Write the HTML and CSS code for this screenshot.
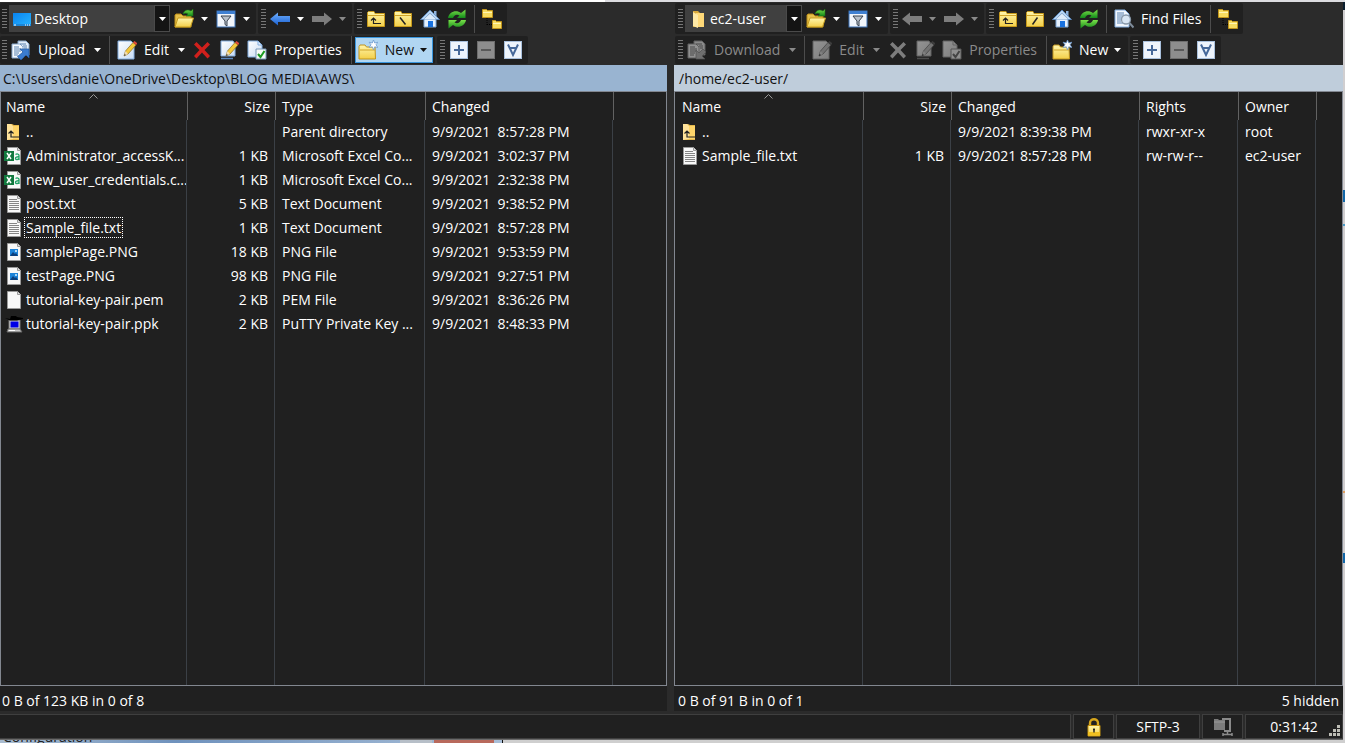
FILE: index.html
```html
<!DOCTYPE html>
<html lang="en">
<head>
	<meta charset="utf-8">
	<title>AWS - ec2-user</title>
	<link rel="stylesheet" href="styles.css">
</head>
<body>

<svg class="sprite" aria-hidden="true">
	<defs>
		<linearGradient id="gold" x1="0" y1="0" x2="0" y2="1">
			<stop offset="0" stop-color="#fff6ae"/><stop offset="1" stop-color="#f3cf48"/>
		</linearGradient>
		<linearGradient id="blue" x1="0" y1="0" x2="0" y2="1">
			<stop offset="0" stop-color="#6fb0ff"/><stop offset="1" stop-color="#1a5fd0"/>
		</linearGradient>
		<linearGradient id="green" x1="0" y1="0" x2="0" y2="1">
			<stop offset="0" stop-color="#7be04a"/><stop offset="1" stop-color="#128a1a"/>
		</linearGradient>
		<linearGradient id="sky" x1="0" y1="0" x2="1" y2="1">
			<stop offset="0" stop-color="#0a84f0"/><stop offset="1" stop-color="#27b4ff"/>
		</linearGradient>
		<linearGradient id="paper" x1="0" y1="0" x2="1" y2="1">
			<stop offset="0" stop-color="#fff"/><stop offset="1" stop-color="#c8dcf4"/>
		</linearGradient>
	</defs>
	<symbol id="caret" viewBox="0 0 7 4"><path d="M0 0h7L3.500 4z" fill="currentColor"/></symbol>
	<symbol id="sort" viewBox="0 0 9 5"><path d="M.5 4.500l4-4 4 4" fill="none" stroke="#999"/></symbol>
	<symbol id="desktop" viewBox="0 0 20 20">
		<rect x="1" y="4" width="18" height="13" fill="url(#sky)"/>
		<path d="M1 15h18v2H1z" fill="#1b86d8"/>
		<path d="M2 16h2M13 16h1M15 16h1M17 16h1" stroke="#fff"/>
	</symbol>
	<symbol id="folder" viewBox="0 0 20 20">
		<path d="M5 2h5l2 2v14H5z" fill="#d9a93c"/>
		<path d="M8 4h8v14H8z" fill="#ffd978"/>
		<path d="M5 3l5 3v13l-5-2z" fill="#ffe9a6"/>
	</symbol>
	<symbol id="open" viewBox="0 0 20 20">
		<path d="M1 18V6l1-1h5l2 2h8v11z" fill="#e6c04a" stroke="#b98b16"/>
		<path d="M1 18L4 9h15.500l-3 9z" fill="url(#gold)" stroke="#c79d20"/>
		<path d="M9 5c1-4 5-5 8-3l2-2v7h-7l2-2c-2-1-3-1-5 0z" fill="url(#green)" stroke="#1d6b16" stroke-width=".6"/>
	</symbol>
	<symbol id="filter" viewBox="0 0 20 20">
		<rect x="1" y="2" width="18" height="16" fill="#f2f6fc" stroke="#3c73b8"/>
		<path d="M1 2h18v3H1z" fill="#3f80d2"/>
		<path d="M5 7h10l-4 5v5l-2-1.500V12z" fill="#b8c0ca" stroke="#39424e"/>
	</symbol>
	<symbol id="back" viewBox="0 0 20 20">
		<path d="M0 10l8-6.500V7h12v6H8v3.500z" fill="var(--flat, url(#blue))"/>
	</symbol>
	<symbol id="forward" viewBox="0 0 20 20">
		<path d="M20 10l-8-6.500V7H0v6h12v3.500z" fill="var(--flat, url(#blue))"/>
	</symbol>
	<symbol id="small-folder" viewBox="0 0 20 20">
		<path d="M1.500 17.500v-14l1-1h5.500l1 2h9.500v13z" fill="url(#gold)" stroke="#c79a1c"/>
		<path d="M2 6.500h16" stroke="#d0a428"/>
	</symbol>
	<symbol id="up" viewBox="0 0 20 20">
		<use href="#small-folder"/>
		<path d="M7.500 9v5.500H15M5 11.500L7.500 9l2.500 2.500" fill="none" stroke="#222" stroke-width="1.200"/>
	</symbol>
	<symbol id="root-win" viewBox="0 0 20 20">
		<use href="#small-folder"/><path d="M7 8.500l5.500 7" stroke="#222" stroke-width="1.500"/>
	</symbol>
	<symbol id="root-unix" viewBox="0 0 20 20">
		<use href="#small-folder"/><path d="M12.500 8.500l-5 7" stroke="#222" stroke-width="1.500"/>
	</symbol>
	<symbol id="home" viewBox="0 0 20 20">
		<path d="M4 10h12v8H4z" fill="#e6f1fd" stroke="#7aa5d6"/>
		<path d="M14 2h2.500v6H14z" fill="#8fb2dc"/>
		<path d="M10 1L.5 10.500h3L10 4.500l6.500 6h3z" fill="#b8d6f5" stroke="#5b8cc6" stroke-width=".8"/>
		<path d="M10 4.500L4 10h12z" fill="#dcebfb"/>
		<path d="M8 12h5v6H8z" fill="#1871df"/>
	</symbol>
	<symbol id="refresh" viewBox="0 0 20 20">
		<path d="M1 9c1-6 8-9 13-5l4.500-3.500V9H10l2.500-2.500C9 4.500 7 7 6 9z" fill="url(#green)"/>
		<path d="M19 11c-1 6-8 9-13 5l-4.500 3.500V11H10l-2.500 2.500C11 15.500 13 13 14 11z" fill="url(#green)"/>
	</symbol>
	<symbol id="tree" viewBox="0 0 20 20">
		<path d="M5 9v7M5 15.500h5" stroke="#000" stroke-dasharray="1 1" fill="none"/>
		<path d="M.5.500h4l1 1h5v7H.500zM10.500 11.500h3l1 1h5v7h-9z" fill="#f7dc60" stroke="#c1941c"/>
		<path d="M1 3.500h9M11 14.500h8" stroke="#fff5b4"/>
	</symbol>
	<symbol id="sheets" viewBox="0 0 20 20">
		<path d="M7 1h8l3 3v11H7z" fill="#e4effb" stroke="#88a8cc"/>
		<path d="M1 4h8l3 3v11H1z" fill="#f5faff" stroke="#88a8cc"/>
		<path d="M9 4h6M12 6h4M13 8h3M3 7h5M3 9h7M3 11h7M3 13h5M3 15h4" stroke="#5b82b0"/>
	</symbol>
	<symbol id="upload" viewBox="0 0 20 20">
		<use href="#sheets"/>
		<path d="M9 9h9v9l-3-3-5 5-3.500-3.500L12 12z" fill="#3b7dd0" stroke="#2459a0" stroke-width=".7"/>
	</symbol>
	<symbol id="download" viewBox="0 0 20 20">
		<use href="#sheets"/>
		<path d="M18 19H9v-9l3 3 4-4 3 3-4 4z" fill="#a4c4e8" stroke="#6a90c0" stroke-width=".7"/>
	</symbol>
	<symbol id="pencil" viewBox="0 0 20 20">
		<path d="M7 16l1.500-5L16 2.500l3 2.500-8 9z" fill="#f3c83c" stroke="#8a6a20" stroke-width=".7"/>
		<path d="M16 2.500L17.500 1l3 2.500L19 5z" fill="#e0483a"/>
		<path d="M7 16l1.500-5 2.500 3z" fill="#f2dcb4"/><path d="M7 16l.7-2 1.100 1z" fill="#222"/>
	</symbol>
	<symbol id="edit" viewBox="0 0 20 20">
		<path d="M1 1h13l3 3v15H1z" fill="url(#paper)" stroke="#83aee0"/><use href="#pencil"/>
	</symbol>
	<symbol id="rename" viewBox="0 0 20 20">
		<path d="M2 1h12l2 3v12H2z" fill="url(#paper)" stroke="#83aee0"/>
		<path d="M2 18.500h12" stroke="#5a87bd" stroke-width="1.500"/><use href="#pencil"/>
	</symbol>
	<symbol id="delete" viewBox="0 0 20 20">
		<path d="M2 4.500L4.500 2 10 7.500 15.500 2 18 4.500 12.500 10l5.500 6-2.500 2.500-5.500-6-5.500 6L2 16l5.500-6z" fill="var(--flat, #d0201c)"/>
	</symbol>
	<symbol id="props" viewBox="0 0 20 20">
		<path d="M1 1h10l4 4v12H1z" fill="url(#paper)" stroke="#83aee0"/>
		<path d="M11 1v4h4" fill="none" stroke="#83aee0"/>
		<path d="M9 9h10v10H9z" fill="#f6faf6" stroke="#7796b8"/>
		<path d="M11 14l2.500 3 4-6" fill="none" stroke="#1c9b20" stroke-width="2"/>
	</symbol>
	<symbol id="new" viewBox="0 0 20 20">
		<path d="M1 19V6.500L2 5h5l1.500 2H17l.5 12z" fill="url(#gold)" stroke="#c1941c"/>
		<path d="M2 10h15" stroke="#cfa52c"/>
		<path d="M15.500 0l1.200 3 3.200-.8-1.900 2.600 1.900 2.700-3.200-.7-1.200 3-1.200-3-3.200.7 1.900-2.700-1.900-2.600 3.200.8z" fill="#fff" stroke="#6d9bd0" stroke-width=".8"/>
	</symbol>
	<symbol id="find" viewBox="0 0 20 20">
		<path d="M1 1h10l4 4v13H1z" fill="#f1f7fe" stroke="#83aee0"/>
		<path d="M3 4h7M3 6h7M3 8h5M3 10h4M3 12h4M3 14h6" stroke="#5b82b0"/>
		<circle cx="12" cy="10.500" r="4.500" fill="#d8e6f4" stroke="#8797a8" stroke-width="1.300"/>
		<path d="M15.500 14l4 4.500" stroke="#7d8b9a" stroke-width="2"/>
	</symbol>
	<symbol id="box" viewBox="0 0 20 20">
		<rect x="1" y="1" width="18" height="18" fill="#eef4fc"/>
		<rect x="1.500" y="1.500" width="17" height="17" fill="none" stroke="#a9c0dc"/>
	</symbol>
	<symbol id="plus" viewBox="0 0 20 20">
		<use href="#box"/><path d="M10 5v10M5 10h10" stroke="#47699a" stroke-width="2"/>
	</symbol>
	<symbol id="minus" viewBox="0 0 20 20">
		<use href="#box"/><path d="M5 10h10" stroke="#9a9a9a" stroke-width="2"/>
	</symbol>
	<symbol id="invert" viewBox="0 0 20 20">
		<use href="#box"/><path d="M5 4.500l5 10.500 5-10.500M7 8h6" fill="none" stroke="#47699a" stroke-width="2"/>
	</symbol>
	<symbol id="parent" viewBox="0 0 20 20">
		<path d="M3 2h5l2 1h5v15H3z" fill="#e5b84c"/><path d="M3 2h4l2 2v13l-6 1z" fill="#ffe299"/>
		<path d="M9 4h6v13H9z" fill="#ffd56a"/>
		<path d="M7 9v6h9M4.500 11.500L7 9l2.500 2.500" fill="none" stroke="#222" stroke-width="1.200"/>
	</symbol>
	<symbol id="page" viewBox="0 0 20 20">
		<path d="M3.500 1.500h10l3 3v14h-13z" fill="#f8f8f8" stroke="#9a9a9a"/>
		<path d="M13.500 1.500v3h3" fill="#ddd" stroke="#9a9a9a"/>
	</symbol>
	<symbol id="txt" viewBox="0 0 20 20">
		<use href="#page"/>
		<path d="M5 5.500h8M5 7.500h10M5 9.500h10M5 11.500h10M5 13.500h10M5 15.500h10" stroke="#858585"/>
	</symbol>
	<symbol id="png" viewBox="0 0 20 20">
		<use href="#page"/><path d="M6 7h8v7H6z" fill="#1c83d8"/>
		<path d="M6 14l3-4 2 2 1-1 2 3z" fill="#0b3f7c"/><circle cx="12" cy="9" r="1" fill="#d9f0ff"/>
	</symbol>
	<symbol id="excel" viewBox="0 0 20 20">
		<use href="#page"/>
		<path d="M0 5h10v10H0z" fill="#12793f"/><path d="M3 7l4 6M7 7l-4 6" stroke="#fff" stroke-width="1.500"/>
		<path d="M11.500 8.500c1.500-1 3.500-.5 3.500 1V14M15 10.800c-2-.2-3.700.3-3.500 1.700.3 1.500 2.500 1.400 3.500 0" fill="none" stroke="#21a366" stroke-width="1.300"/>
	</symbol>
	<symbol id="putty" viewBox="0 0 20 20">
		<path d="M5 6h11v9H5z" fill="#d8d8d8" stroke="#777"/><path d="M6.500 7.500h8v6h-8z" fill="#0000e6"/>
		<path d="M4 15h12l2 3H3z" fill="#c8c8c8" stroke="#666"/><path d="M5 16.500h6" stroke="#fff"/>
		<path d="M1 4l5 1 1-3h5l1 1 6 1v1l-6 1.500H6z" fill="#000"/>
	</symbol>
	<symbol id="lock" viewBox="0 0 20 20">
		<path d="M6 9V6c0-5 8-5 8 0v3" fill="none" stroke="#d6a51c" stroke-width="2.400"/>
		<path d="M4 8.500h12V19H4z" fill="url(#gold)" stroke="#c4910e"/>
		<path d="M4 15h12v3.500H4z" fill="#f0c020"/><path d="M10 11.500v4M9 12.500h2" stroke="#222" stroke-width="1.400"/>
	</symbol>
	<symbol id="clamp" viewBox="0 0 20 20">
		<path d="M1 2h4l1 1h6v10H1z" fill="#7c7c7c"/><path d="M1 5h11" stroke="#999"/>
		<path d="M9 2h8v12H11" fill="none" stroke="#8a8a8a" stroke-width="2"/>
		<path d="M10 17.500h9M10 16v3M19 16v3M14.500 13v4" stroke="#8a8a8a" stroke-width="1.500"/>
	</symbol>
</svg>

<div class="top-edge"></div>
<div class="middle">
<main class="window">
	<div class="panes">

		<section class="pane local">
			<div class="toolbars">
				<div class="bar bar-nav">
					<div class="group">
						<span class="grip"></span>
						<div class="combo">
							<svg class="icon"><use href="#desktop"/></svg>
							<select aria-label="Local directory"><option>Desktop</option></select>
							<span class="drop"><svg class="caret"><use href="#caret"/></svg></span>
						</div>
						<button class="tb" aria-label="Open directory"><svg class="icon"><use href="#open"/></svg></button>
						<button class="more" aria-label="Open directory menu"><svg class="caret"><use href="#caret"/></svg></button>
						<button class="tb" aria-label="Filter"><svg class="icon"><use href="#filter"/></svg></button>
						<button class="more" aria-label="Filter menu"><svg class="caret"><use href="#caret"/></svg></button>
					</div>
					<div class="group">
						<span class="grip"></span>
						<button class="tb" aria-label="Back"><svg class="icon"><use href="#back"/></svg></button>
						<button class="more" aria-label="Back history"><svg class="caret"><use href="#caret"/></svg></button>
						<button class="tb" aria-label="Forward" disabled><svg class="icon"><use href="#forward"/></svg></button>
						<button class="more" aria-label="Forward history" disabled><svg class="caret"><use href="#caret"/></svg></button>
					</div>
					<div class="group">
						<span class="grip"></span>
						<button class="tb" aria-label="Parent directory"><svg class="icon"><use href="#up"/></svg></button>
						<button class="tb" aria-label="Root directory"><svg class="icon"><use href="#root-win"/></svg></button>
						<button class="tb" aria-label="Home directory"><svg class="icon"><use href="#home"/></svg></button>
						<button class="tb" aria-label="Refresh"><svg class="icon"><use href="#refresh"/></svg></button>
						<span class="sep"></span>
						<button class="tb" aria-label="Tree"><svg class="icon"><use href="#tree"/></svg></button>
					</div>
				</div>
				<div class="bar">
					<div class="group">
						<span class="grip"></span>
						<button class="tb text"><svg class="icon"><use href="#upload"/></svg>Upload</button>
						<button class="more" aria-label="Upload menu"><svg class="caret"><use href="#caret"/></svg></button>
						<span class="sep"></span>
						<button class="tb text"><svg class="icon"><use href="#edit"/></svg>Edit</button>
						<button class="more" aria-label="Edit menu"><svg class="caret"><use href="#caret"/></svg></button>
						<button class="tb" aria-label="Delete"><svg class="icon"><use href="#delete"/></svg></button>
						<button class="tb" aria-label="Rename"><svg class="icon"><use href="#rename"/></svg></button>
						<button class="tb text"><svg class="icon"><use href="#props"/></svg>Properties</button>
						<span class="sep"></span>
						<button class="tb text menu hot"><svg class="icon"><use href="#new"/></svg>New<svg class="caret"><use href="#caret"/></svg></button>
					</div>
					<div class="group">
						<span class="grip"></span>
						<button class="tb" aria-label="Select files"><svg class="icon"><use href="#plus"/></svg></button>
						<button class="tb" aria-label="Unselect files" disabled><svg class="icon"><use href="#minus"/></svg></button>
						<button class="tb" aria-label="Select all"><svg class="icon"><use href="#invert"/></svg></button>
					</div>
				</div>
			</div>
			<div class="path">C:\Users\danie\OneDrive\Desktop\BLOG MEDIA\AWS\</div>
			<div class="list">
				<table>
					<colgroup><col class="c-name"><col class="c-size"><col class="c-type"><col class="c-date"><col></colgroup>
					<thead>
						<tr><th>Name<svg class="sort"><use href="#sort"/></svg></th><th class="num">Size</th><th>Type</th><th>Changed</th><th></th></tr>
					</thead>
					<tbody>
						<tr><td><svg class="icon"><use href="#parent"/></svg><span>..</span></td><td class="num"></td><td>Parent directory</td><td>9/9/2021  8:57:28 PM</td><td></td></tr>
						<tr><td><svg class="icon"><use href="#excel"/></svg><span>Administrator_accessK...</span></td><td class="num">1 KB</td><td>Microsoft Excel Co...</td><td>9/9/2021  3:02:37 PM</td><td></td></tr>
						<tr><td><svg class="icon"><use href="#excel"/></svg><span>new_user_credentials.c...</span></td><td class="num">1 KB</td><td>Microsoft Excel Co...</td><td>9/9/2021  2:32:38 PM</td><td></td></tr>
						<tr><td><svg class="icon"><use href="#txt"/></svg><span>post.txt</span></td><td class="num">5 KB</td><td>Text Document</td><td>9/9/2021  9:38:52 PM</td><td></td></tr>
						<tr><td><svg class="icon"><use href="#txt"/></svg><span class="focused">Sample_file.txt</span></td><td class="num">1 KB</td><td>Text Document</td><td>9/9/2021  8:57:28 PM</td><td></td></tr>
						<tr><td><svg class="icon"><use href="#png"/></svg><span>samplePage.PNG</span></td><td class="num">18 KB</td><td>PNG File</td><td>9/9/2021  9:53:59 PM</td><td></td></tr>
						<tr><td><svg class="icon"><use href="#png"/></svg><span>testPage.PNG</span></td><td class="num">98 KB</td><td>PNG File</td><td>9/9/2021  9:27:51 PM</td><td></td></tr>
						<tr><td><svg class="icon"><use href="#page"/></svg><span>tutorial-key-pair.pem</span></td><td class="num">2 KB</td><td>PEM File</td><td>9/9/2021  8:36:26 PM</td><td></td></tr>
						<tr><td><svg class="icon"><use href="#putty"/></svg><span>tutorial-key-pair.ppk</span></td><td class="num">2 KB</td><td>PuTTY Private Key ...</td><td>9/9/2021  8:48:33 PM</td><td></td></tr>
						<tr class="fill"><td></td><td></td><td></td><td></td><td></td></tr>
					</tbody>
				</table>
			</div>
			<div class="summary"><span>0 B of 123 KB in 0 of 8</span></div>
		</section>

		<section class="pane remote">
			<div class="toolbars">
				<div class="bar bar-nav">
					<div class="group">
						<span class="grip"></span>
						<div class="combo">
							<svg class="icon"><use href="#folder"/></svg>
							<select aria-label="Remote directory"><option>ec2-user</option></select>
							<span class="drop"><svg class="caret"><use href="#caret"/></svg></span>
						</div>
						<button class="tb" aria-label="Open directory"><svg class="icon"><use href="#open"/></svg></button>
						<button class="more" aria-label="Open directory menu"><svg class="caret"><use href="#caret"/></svg></button>
						<button class="tb" aria-label="Filter"><svg class="icon"><use href="#filter"/></svg></button>
						<button class="more" aria-label="Filter menu"><svg class="caret"><use href="#caret"/></svg></button>
					</div>
					<div class="group">
						<span class="grip"></span>
						<button class="tb" aria-label="Back" disabled><svg class="icon"><use href="#back"/></svg></button>
						<button class="more" aria-label="Back history" disabled><svg class="caret"><use href="#caret"/></svg></button>
						<button class="tb" aria-label="Forward" disabled><svg class="icon"><use href="#forward"/></svg></button>
						<button class="more" aria-label="Forward history" disabled><svg class="caret"><use href="#caret"/></svg></button>
					</div>
					<div class="group">
						<span class="grip"></span>
						<button class="tb" aria-label="Parent directory"><svg class="icon"><use href="#up"/></svg></button>
						<button class="tb" aria-label="Root directory"><svg class="icon"><use href="#root-unix"/></svg></button>
						<button class="tb" aria-label="Home directory"><svg class="icon"><use href="#home"/></svg></button>
						<button class="tb" aria-label="Refresh"><svg class="icon"><use href="#refresh"/></svg></button>
						<span class="sep"></span>
						<button class="tb text"><svg class="icon"><use href="#find"/></svg>Find Files</button>
						<span class="sep"></span>
						<button class="tb" aria-label="Tree"><svg class="icon"><use href="#tree"/></svg></button>
					</div>
				</div>
				<div class="bar">
					<div class="group">
						<span class="grip"></span>
						<button class="tb text" disabled><svg class="icon"><use href="#download"/></svg>Download</button>
						<button class="more" aria-label="Download menu" disabled><svg class="caret"><use href="#caret"/></svg></button>
						<span class="sep"></span>
						<button class="tb text" disabled><svg class="icon"><use href="#edit"/></svg>Edit</button>
						<button class="more" aria-label="Edit menu" disabled><svg class="caret"><use href="#caret"/></svg></button>
						<button class="tb" aria-label="Delete" disabled><svg class="icon"><use href="#delete"/></svg></button>
						<button class="tb" aria-label="Rename" disabled><svg class="icon"><use href="#rename"/></svg></button>
						<button class="tb text" disabled><svg class="icon"><use href="#props"/></svg>Properties</button>
						<span class="sep"></span>
						<button class="tb text menu"><svg class="icon"><use href="#new"/></svg>New<svg class="caret"><use href="#caret"/></svg></button>
					</div>
					<div class="group">
						<span class="grip"></span>
						<button class="tb" aria-label="Select files"><svg class="icon"><use href="#plus"/></svg></button>
						<button class="tb" aria-label="Unselect files" disabled><svg class="icon"><use href="#minus"/></svg></button>
						<button class="tb" aria-label="Select all"><svg class="icon"><use href="#invert"/></svg></button>
					</div>
				</div>
			</div>
			<div class="path">/home/ec2-user/</div>
			<div class="list">
				<table>
					<colgroup><col class="c-name"><col class="c-size"><col class="c-date"><col class="c-rights"><col class="c-owner"><col></colgroup>
					<thead>
						<tr><th>Name<svg class="sort"><use href="#sort"/></svg></th><th class="num">Size</th><th>Changed</th><th>Rights</th><th>Owner</th><th></th></tr>
					</thead>
					<tbody>
						<tr><td><svg class="icon"><use href="#parent"/></svg><span>..</span></td><td class="num"></td><td>9/9/2021 8:39:38 PM</td><td>rwxr-xr-x</td><td>root</td><td></td></tr>
						<tr><td><svg class="icon"><use href="#txt"/></svg><span>Sample_file.txt</span></td><td class="num">1 KB</td><td>9/9/2021 8:57:28 PM</td><td>rw-rw-r--</td><td>ec2-user</td><td></td></tr>
						<tr class="fill"><td></td><td></td><td></td><td></td><td></td><td></td></tr>
					</tbody>
				</table>
			</div>
			<div class="summary"><span>0 B of 91 B in 0 of 1</span><span>5 hidden</span></div>
		</section>

	</div>

	<footer class="statusbar">
		<div class="cell wide"></div>
		<div class="cell small"><svg class="icon"><use href="#lock"/></svg></div>
		<div class="cell proto">SFTP-3</div>
		<div class="cell small"><svg class="icon"><use href="#clamp"/></svg></div>
		<div class="cell time">0:31:42
			<svg class="resize" viewBox="0 0 12 12"><path d="M8 0h3v3H8zM4 4h3v3H4zM8 4h3v3H8zM0 8h3v3H0zM4 8h3v3H4zM8 8h3v3H8z" fill="#bdbdb5"/></svg>
		</div>
	</footer>
</main>
<div class="side-edge"></div>
</div>
<div class="bottom-edge">
	<div class="behind"><span>Configuration</span><i class="knob"></i><i class="close"></i></div>
</div>

</body>
</html>
```

FILE: styles.css
```css
* {
  box-sizing: border-box;
}

body {
  margin: 0;
  height: 100vh;
  display: flex;
  flex-direction: column;
  overflow: hidden;
  background: #2b2b2b;
  color: #fff;
  font: 14px/20px "Open Sans", "Noto Sans", sans-serif;
}

.sprite {
  position: absolute;
  width: 0;
  height: 0;
}

.icon {
  width: 20px;
  height: 20px;
  flex: none;
}

.caret {
  width: 7px;
  height: 4px;
  flex: none;
}

/* slivers of the windows behind */
.top-edge {
  height: 2px;
  flex: none;
  background: linear-gradient(90deg, #fff 45%, #dcdce0 45%);
}

.side-edge {
  width: 2px;
  flex: none;
  background: linear-gradient(#0b1e2e 8px, #d0ced0 8px 188px, #1267a8 188px 200px, #d0ced0 200px 222px, #4a9cc8 222px 224px, #d0ced0 224px 489px, #e0a060 489px 491px, #d0ced0 491px 551px, #1267a8 551px 561px, #d0ced0 561px);
}

.bottom-edge {
  height: 3px;
  flex: none;
  overflow: hidden;
  background: #cfcfcf;
}

.behind {
  width: 503px;
  height: 3px;
  display: flex;
  align-items: flex-end;
  gap: 2px;
  border-right: 1px solid #111;
  background: linear-gradient(90deg, #a9bcd0, #6f92bd 35%, #a9bfd8);
  color: #222;
}

.behind span {
  flex: 1;
  padding-left: 3px;
  line-height: 12px;
}

.knob {
  width: 32px;
  height: 3px;
  background: #b7bfc8;
}

.close {
  width: 60px;
  height: 3px;
  margin-right: 8px;
  background: #b8695c;
}

.middle {
  flex: 1;
  min-height: 0;
  display: flex;
}

.window {
  flex: 1;
  min-width: 0;
  display: flex;
  flex-direction: column;
  border-bottom: 1px solid #6a6a6a;
}

.panes {
  flex: 1;
  min-height: 0;
  display: flex;
  gap: 7px;
}

.pane {
  flex: 1;
  min-width: 0;
  display: flex;
  flex-direction: column;
}

.remote {
  flex-basis: 2px;
}

/* toolbars */
.toolbars {
  display: flex;
  flex-direction: column;
  gap: 2px;
  padding: 1px 0;
}

.remote .toolbars {
  padding-left: 1px;
}

.bar {
  display: flex;
  gap: 2px;
  height: 28px;
}

.bar-nav {
  height: 31px;
}

.group {
  display: flex;
  align-items: center;
  padding: 0 2px 0 3px;
  background: #202020;
  border-radius: 2px;
}

.local .group:first-child {
  padding-left: 2px;
}

.grip {
  width: 5px;
  height: 20px;
  background: repeating-linear-gradient(#777 0 1px, transparent 1px 3px);
}

.tb,
.more {
  display: flex;
  align-items: center;
  justify-content: center;
  height: 26px;
  padding: 0;
  border: 0;
  background: none;
  color: #fff;
  font: inherit;
}

.tb {
  width: 27px;
}

.more {
  width: 15px;
}

.text {
  width: auto;
  padding: 0 5px 0 4px;
  gap: 7px;
}

.menu {
  padding: 0 5px 0 2px;
}

.menu .caret {
  margin-left: -1px;
}

.hot {
  border: 1px solid #3a96dd;
  background: #b1d6f2;
  color: #111;
}

.tb:disabled,
.more:disabled {
  color: #8a8a8a;
}

.tb:disabled .icon {
  --flat: #d8d8d8;
  filter: grayscale(1) brightness(.58);
}

.sep {
  width: 1px;
  height: 28px;
  margin: 0 3px 0 4px;
  background: #4c4c4c;
}

.combo {
  display: flex;
  align-items: center;
  width: 161px;
  height: 27px;
  margin-left: 2px;
  padding-left: 3px;
  background: #404040;
}

.remote .combo {
  width: 117px;
}

.combo select {
  flex: 1;
  min-width: 0;
  height: 24px;
  padding: 0 0 0 2px;
  border: 0;
  appearance: none;
  background: transparent;
  color: #fff;
  font: inherit;
}

.drop {
  display: flex;
  align-items: center;
  justify-content: center;
  width: 16px;
  height: 27px;
  border: 1px solid #4a4a4a;
  background: #141414;
}

.path {
  height: 26px;
  padding: 4px 3px 2px;
  background: #99b4d1;
  color: #111;
  white-space: nowrap;
  overflow: hidden;
}

.remote .path {
  padding-left: 5px;
  background: #bfcddb;
}

/* file lists */
.list {
  flex: 1;
  min-height: 0;
  border: 1px solid #828790;
  background: #202020;
}

.list table {
  width: 100%;
  height: 100%;
  table-layout: fixed;
  border-collapse: separate;
  border-spacing: 0;
}

.c-name {
  width: 186px;
}

.remote .c-name {
  width: 188px;
}

.c-size {
  width: 88px;
}

.c-type {
  width: 150px;
}

.c-date {
  width: 188px;
}

.c-rights {
  width: 99px;
}

.c-owner {
  width: 78px;
}

th,
td {
  height: 24px;
  padding: 0 0 0 7px;
  text-align: left;
  font-weight: normal;
  white-space: pre;
  overflow: hidden;
}

td {
  border-right: 1px solid #3b4046;
}

td:last-child {
  border-right: 0;
}

th {
  position: relative;
  height: 28px;
  padding-top: 2px;
  border-left: 1px solid #626262;
}

th:not(:first-child) {
  padding-left: 6px;
}

th:first-child {
  padding-left: 5px;
  border-left: 0;
}

td:first-child {
  padding-left: 3px;
}

.remote th:first-child {
  padding-left: 7px;
}

.remote td:first-child {
  padding-left: 5px;
}

th.num {
  padding-right: 5px;
  text-align: right;
}

td.num {
  padding-right: 6px;
  text-align: right;
}

td .icon {
  vertical-align: top;
}

td span {
  padding: 0 1px;
  margin-left: 1px;
}

.focused {
  outline: 1px dotted #fff;
}

.fill td {
  height: auto;
}

.sort {
  position: absolute;
  top: 2px;
  left: 50%;
  width: 9px;
  height: 5px;
  margin-left: -5px;
}

.summary {
  display: flex;
  justify-content: space-between;
  height: 25px;
  padding: 5px 4px 0 2px;
  background: #202020;
}

.remote .summary {
  padding-left: 4px;
}

.statusbar {
  display: flex;
  gap: 2px;
  height: 25px;
  margin-top: 3px;
}

.cell {
  display: flex;
  align-items: center;
  justify-content: center;
  border: 1px solid #3f3f3f;
  background: #202020;
}

.wide {
  flex: 1;
  border-left: 0;
}

.small {
  width: 41px;
}

.proto {
  width: 84px;
}

.time {
  position: relative;
  width: 98px;
}

.resize {
  position: absolute;
  right: 1px;
  bottom: 1px;
  width: 12px;
  height: 12px;
}
```
